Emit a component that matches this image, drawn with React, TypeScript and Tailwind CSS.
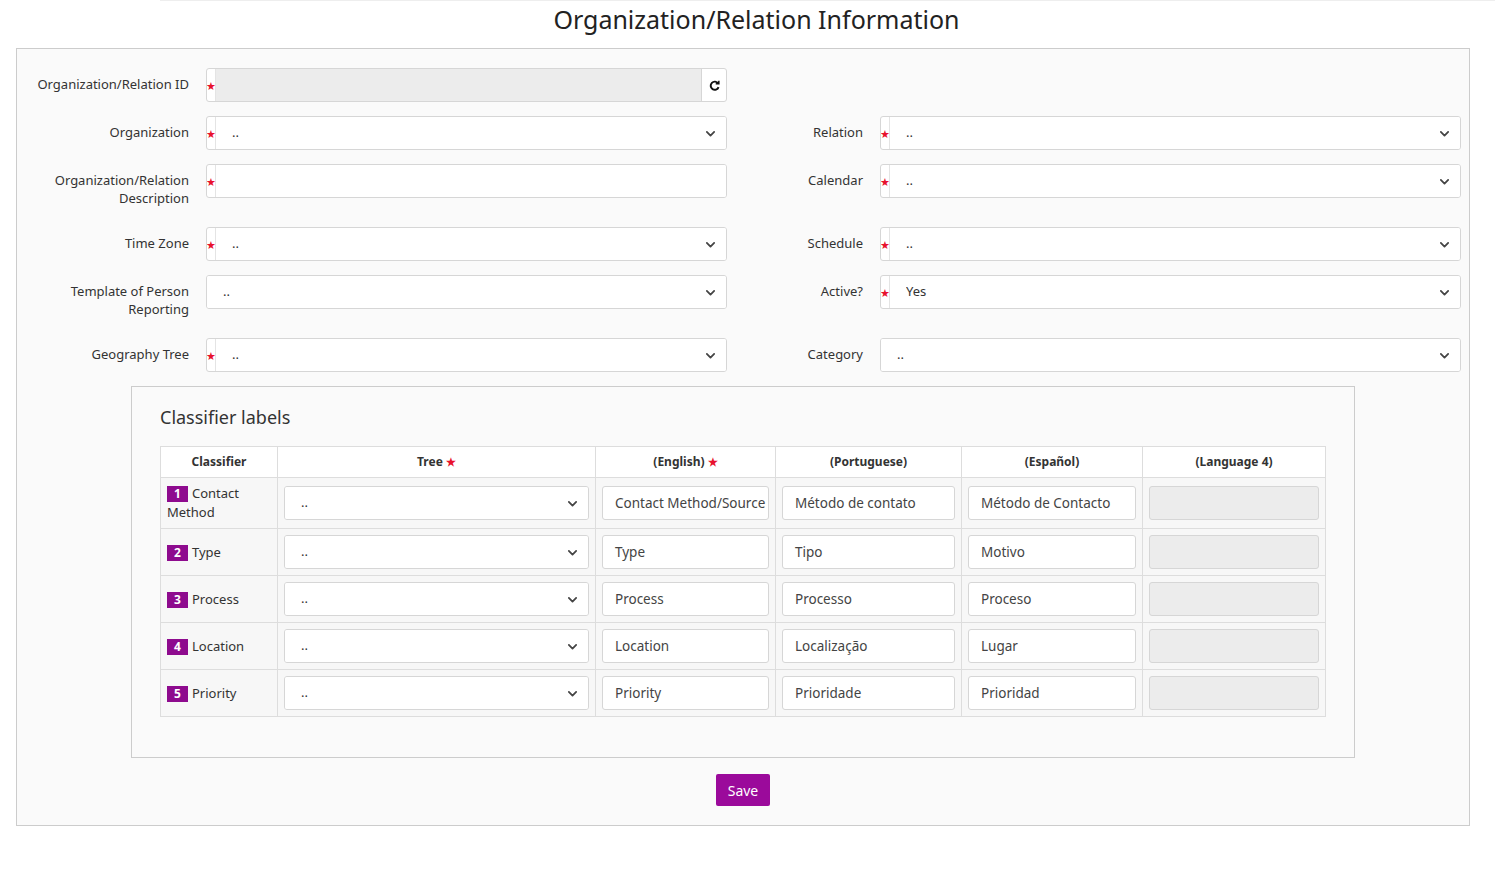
import React from "react";

const Star = () => <span className="text-[#e8112d] text-[11px] leading-none">★</span>;

const Chevron = () => (
  <svg viewBox="0 0 16 16" className="w-[13px] h-[13px] text-[#444]" fill="none" stroke="currentColor" strokeWidth={2.2}>
    <path d="M3.5 6l4.5 4.5 4.5-4.5" strokeLinecap="round" strokeLinejoin="round" />
  </svg>
);

const Field = ({ req, select, value = "", disabled, refresh }: { req?: boolean; select?: boolean; value?: string; disabled?: boolean; refresh?: boolean }) => (
  <div className="flex h-[34px] w-full border border-[#d6d6d6] rounded-[3px] bg-white overflow-hidden">
    {req && <div className="w-[9px] flex items-center justify-center border-r border-[#e4e4e4]"><Star /></div>}
    <div className={`flex-1 flex items-center ${disabled ? "bg-[#ececec]" : "bg-white"} pl-4 pr-[9px] text-[13px] text-[#333]`}>
      <span className="flex-1 truncate">{value}</span>
      {select && <Chevron />}
    </div>
    {refresh && (
      <div className="w-[25px] flex items-center justify-center border-l border-[#d6d6d6]">
        <svg viewBox="0 0 16 16" className="w-[13px] h-[13px]" fill="none" stroke="#111" strokeWidth={2.4}>
          <path d="M12.5 5.5A5 5 0 1 0 13 10" />
          <path d="M13.5 2v4h-4" fill="#111" strokeWidth={1.5} />
        </svg>
      </div>
    )}
  </div>
);

const Row = ({ label, children, w }: { label: React.ReactNode; children: React.ReactNode; w: string }) => (
  <div className="flex items-start">
    <div className={`${w} shrink-0 text-right pr-[17px] pt-[7px] pb-[6px] leading-[18px] text-[13px] text-[#333]`}>{label}</div>
    {children}
  </div>
);

const rows = [
  ["Contact Method", "Contact Method/Source", "Método de contato", "Método de Contacto"],
  ["Type", "Type", "Tipo", "Motivo"],
  ["Process", "Process", "Processo", "Proceso"],
  ["Location", "Location", "Localização", "Lugar"],
  ["Priority", "Priority", "Prioridade", "Prioridad"],
];

const Cell = ({ v, disabled }: { v?: string; disabled?: boolean }) => (
  <div className={`h-[34px] border border-[#d6d6d6] rounded-[3px] flex items-center px-3 text-[13.5px] text-[#444] whitespace-nowrap overflow-hidden ${disabled ? "bg-[#ececec]" : "bg-white"}`}>{v}</div>
);

export default function App() {
  const left: [React.ReactNode, any][] = [
    ["Organization/Relation ID", { req: true, disabled: true, refresh: true }],
    ["Organization", { req: true, select: true, value: ".." }],
    [<>Organization/Relation<br />Description</>, { req: true }],
    ["Time Zone", { req: true, select: true, value: ".." }],
    [<>Template of Person<br />Reporting</>, { select: true, value: ".." }],
    ["Geography Tree", { req: true, select: true, value: ".." }],
  ];
  const right: ([string, any] | null)[] = [
    null,
    ["Relation", { req: true, select: true, value: ".." }],
    ["Calendar", { req: true, select: true, value: ".." }],
    ["Schedule", { req: true, select: true, value: ".." }],
    ["Active?", { req: true, select: true, value: "Yes" }],
    ["Category", { select: true, value: ".." }],
  ];
  return (
    <div className="w-[1495px] bg-white pb-[13px]" style={{ fontFamily: '"Noto Sans", sans-serif' }}>
      <div className="ml-[160px] border-t border-[#eee]" />
      <h1 className="text-center text-[25px] leading-[36px] text-[#222] mb-[11px] ml-[18px]">Organization/Relation Information</h1>
      <div className="mx-[16px] w-[1454px] border border-[#ccc] bg-[#fafafa] pt-[19px] pb-[19px]">
        <div className="flex flex-col gap-[14px] pr-[8px]">
          {left.map(([l, p], i) => (
            <div key={i} className="flex">
              <Row label={l} w="w-[189px]">
                <div className="w-[521px]"><Field {...p} /></div>
              </Row>
              {right[i] && (
                <div className="flex-1">
                  <Row label={right[i]![0]} w="w-[153px]">
                    <div className="flex-1"><Field {...right[i]![1]} /></div>
                  </Row>
                </div>
              )}
            </div>
          ))}
        </div>
        <div className="ml-[114px] mt-[14px] w-[1224px] border border-[#ccc] pt-[17px] pb-[40px] px-[28px]">
          <h2 className="text-[18px] leading-[26px] text-[#333] mb-[16px]">Classifier labels</h2>
          <table className="w-[1166px] table-fixed border-collapse text-[13px] text-[#333]">
            <thead>
              <tr className="bg-white h-[31px] text-[12px] font-semibold">
                <th className="border border-[#ddd] w-[117px]">Classifier</th>
                <th className="border border-[#ddd] w-[318px]">Tree <Star /></th>
                <th className="border border-[#ddd] w-[180px]">(English) <Star /></th>
                <th className="border border-[#ddd] w-[186px]">(Portuguese)</th>
                <th className="border border-[#ddd] w-[181px]">(Español)</th>
                <th className="border border-[#ddd]">(Language 4)</th>
              </tr>
            </thead>
            <tbody>
              {rows.map((r, i) => (
                <tr key={i} className={`bg-[#f7f7f7] ${i === 0 ? "h-[51px]" : "h-[47px]"}`}>
                  <td className="border border-[#ddd] px-[6px] leading-[19px] align-middle">
                    <span className="inline-block bg-[#8e0b8e] text-white font-bold text-[12px] w-[21px] h-[16px] text-center leading-[16px] mr-[4px]">{i + 1}</span>
                    {r[0]}
                  </td>
                  <td className="border border-[#ddd] px-[6px]"><Field select value=".." /></td>
                  <td className="border border-[#ddd] px-[6px]"><Cell v={r[1]} /></td>
                  <td className="border border-[#ddd] px-[6px]"><Cell v={r[2]} /></td>
                  <td className="border border-[#ddd] px-[6px]"><Cell v={r[3]} /></td>
                  <td className="border border-[#ddd] px-[6px]"><Cell disabled /></td>
                </tr>
              ))}
            </tbody>
          </table>
        </div>
        <div className="flex justify-center mt-[16px]">
          <button className="bg-[#9b0a9b] text-white text-[14px] h-[32px] px-[12px] rounded-[2px]">Save</button>
        </div>
      </div>
    </div>
  );
}
